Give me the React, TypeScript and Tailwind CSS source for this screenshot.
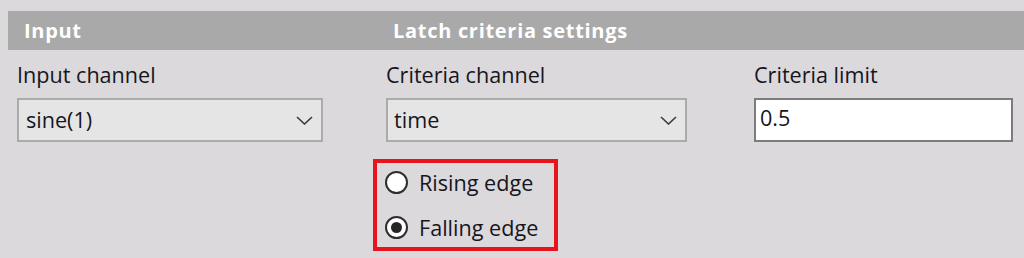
import React from "react";

const Chevron = () => (
  <svg width="17" height="9" viewBox="0 0 17 9" fill="none">
    <path d="M1 1 L8.5 8 L16 1" stroke="#3a3a3a" strokeWidth="1.6" />
  </svg>
);

const Radio = ({ checked }: { checked?: boolean }) => (
  <span className="w-[23px] h-[23px] rounded-full border-[2px] border-[#2e2e2e] bg-white flex items-center justify-center shrink-0">
    {checked && <span className="w-[11px] h-[11px] rounded-full bg-[#262626]" />}
  </span>
);

export default function App() {
  return (
    <div
      className="w-[1024px] h-[258px] bg-[#dbd9db] pt-[11px] text-[#16161e] overflow-hidden"
      style={{ fontFamily: '"Open Sans", "Noto Sans", sans-serif' }}
    >
      <div className="ml-[8px] h-[39px] bg-[#a9a9a9] grid grid-cols-[369px_368px_1fr] pl-[9px] items-center text-white font-bold text-[20px] tracking-[0.7px]">
        <span className="pl-[7px]">Input</span>
        <span className="pl-[7px]">Latch criteria settings</span>
        <span />
      </div>
      <div className="grid grid-cols-[369px_368px_1fr] pl-[17px] pt-[10px] text-[21.6px]">
        <div className="flex flex-col">
          <div className="leading-[30px] h-[38px]">Input channel</div>
          <div className="w-[306px] h-[44px] border-[2px] border-[#ababab] bg-[#e5e5e5] flex items-center justify-between pl-[7px] pr-[8px]">
            <span>sine(1)</span>
            <Chevron />
          </div>
        </div>
        <div className="flex flex-col">
          <div className="leading-[30px] h-[38px]">Criteria channel</div>
          <div className="w-[301px] h-[44px] border-[2px] border-[#ababab] bg-[#e5e5e5] flex items-center justify-between pl-[6px] pr-[8px]">
            <span>time</span>
            <Chevron />
          </div>
          <div className="ml-[-13px] mt-[17px] w-[185px] h-[92px] border-[4px] border-[#e8141b] flex flex-col justify-center gap-[22px] pl-[8px]">
            <div className="flex items-center gap-[11px]">
              <Radio />
              <span className="leading-[22px]">Rising edge</span>
            </div>
            <div className="flex items-center gap-[11px]">
              <Radio checked />
              <span className="leading-[22px]">Falling edge</span>
            </div>
          </div>
        </div>
        <div className="flex flex-col">
          <div className="leading-[30px] h-[38px]">Criteria limit</div>
          <div className="w-[259px] h-[44px] border-[2px] border-[#7c7c7c] bg-white flex items-center pl-[4px] pb-[3px]">
            <span>0.5</span>
          </div>
        </div>
      </div>
    </div>
  );
}
